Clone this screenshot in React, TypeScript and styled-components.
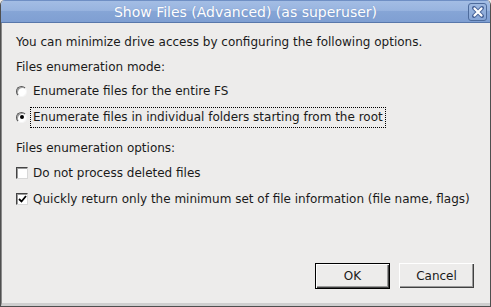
import styled, { createGlobalStyle } from 'styled-components';

const Global = createGlobalStyle`
  html, body {
    margin: 0;
    padding: 0;
    background: #edeceb;
  }
  * {
    box-sizing: border-box;
  }
`;

const Window = styled.div`
  width: 491px;
  height: 307px;
  display: flex;
  flex-direction: column;
  background: #edeceb;
  border: 1px solid #4f4f4f;
  border-top: none;
  border-radius: 5px 5px 0 0;
  overflow: hidden;
  font-family: "DejaVu Sans", Verdana, sans-serif;
  font-size: 12px;
  color: #1a1a1a;
`;

const TitleBar = styled.div`
  height: 23px;
  flex: none;
  position: relative;
  display: flex;
  align-items: center;
  justify-content: center;
  background: linear-gradient(#a3bde4 0%, #98b4df 45%, #86a5d6 48%, #7f9fd2 100%);
  border-top: 1px solid #6f8fc4;
  border-bottom: 1px solid #5877aa;
  color: #ffffff;
  font-size: 14px;
  text-shadow: 0 0 1px #6f8cbf;
`;

const CloseButton = styled.div`
  position: absolute;
  right: 3px;
  top: 2px;
  width: 19px;
  height: 18px;
  border: 1px solid #4d6b9c;
  border-radius: 3px;
  background: linear-gradient(#9db8e0, #86a5d6);
  display: flex;
  align-items: center;
  justify-content: center;
`;

const Body = styled.div`
  flex: 1;
  display: flex;
  flex-direction: column;
  padding: 11px 16px 0 14px;
  border-left: 1px solid #8a8a8a;
  border-bottom: 3px solid #cfcfcf;
`;

const Text = styled.div<{ $top: number }>`
  line-height: 16px;
  margin-top: ${(p) => p.$top}px;
  white-space: nowrap;
`;

const OptionRow = styled.div<{ $top: number }>`
  display: flex;
  align-items: center;
  height: 20px;
  margin-top: ${(p) => p.$top}px;
`;

const Label = styled.span<{ $focused?: boolean }>`
  margin-left: 2px;
  padding: 1px 2px 2px;
  line-height: 16px;
  border: 1px dotted ${(p) => (p.$focused ? '#000' : 'transparent')};
  white-space: nowrap;
`;

const Radio = styled.span<{ $checked?: boolean }>`
  width: 11px;
  height: 11px;
  margin-right: 1px;
  border-radius: 50%;
  background: #ffffff;
  border-top: 1.5px solid #555;
  border-left: 1.5px solid #555;
  border-right: 1px solid #f5f5f5;
  border-bottom: 1px solid #f5f5f5;
  box-shadow: inset 1px 1px 0 #a0a0a0;
  display: flex;
  align-items: center;
  justify-content: center;
  &::after {
    content: '';
    width: 4px;
    height: 4px;
    border-radius: 50%;
    background: ${(p) => (p.$checked ? '#000' : 'transparent')};
  }
`;

const Check = styled.span`
  width: 12px;
  height: 12px;
  background: #ffffff;
  border-top: 1px solid #444;
  border-left: 1px solid #444;
  border-right: 1px solid #d8d8d8;
  border-bottom: 1px solid #d8d8d8;
  box-shadow: inset 1px 1px 0 #9a9a9a;
  display: flex;
  align-items: center;
  justify-content: center;
`;

const Footer = styled.div`
  margin-top: auto;
  margin-bottom: 14px;
  display: flex;
  align-items: flex-start;
  justify-content: flex-end;
  gap: 9px;
`;

const Button = styled.button<{ $default?: boolean }>`
  width: 75px;
  height: ${(p) => (p.$default ? 26 : 25)}px;
  padding: 0;
  font-family: inherit;
  font-size: 12px;
  color: #1a1a1a;
  background: #edeceb;
  border: 1px solid ${(p) => (p.$default ? '#000' : 'transparent')};
  box-shadow: ${(p) =>
    p.$default
      ? 'inset 1px 1px 0 #fff, inset -1px -1px 0 #404040, inset -2px -2px 0 #9a9a9a'
      : 'inset 1px 1px 0 #fff, inset -1px -1px 0 #404040, inset -2px -2px 0 #9a9a9a'};
  border-width: ${(p) => (p.$default ? '1px' : '0')};
`;

const CheckMark = () => (
  <svg width="9" height="9" viewBox="0 0 9 9">
    <path d="M1 4 L3.5 6.5 L8 1" fill="none" stroke="#000" strokeWidth="1.8" />
  </svg>
);

const CloseIcon = () => (
  <svg width="12" height="12" viewBox="0 0 12 12">
    <path d="M2 2 L10 10 M10 2 L2 10" stroke="#4a659a" strokeWidth="4" strokeLinecap="round" />
    <path d="M2.5 2.5 L9.5 9.5 M9.5 2.5 L2.5 9.5" stroke="#ffffff" strokeWidth="2.2" strokeLinecap="round" />
  </svg>
);

export default function App() {
  return (
    <>
      <Global />
      <Window>
        <TitleBar>
          Show Files (Advanced) (as superuser)
          <CloseButton>
            <CloseIcon />
          </CloseButton>
        </TitleBar>
        <Body>
          <Text $top={0}>You can minimize drive access by configuring the following options.</Text>
          <Text $top={9}>Files enumeration mode:</Text>
          <OptionRow $top={6}>
            <Radio />
            <Label>Enumerate files for the entire FS</Label>
          </OptionRow>
          <OptionRow $top={6}>
            <Radio $checked />
            <Label $focused>Enumerate files in individual folders starting from the root</Label>
          </OptionRow>
          <Text $top={13}>Files enumeration options:</Text>
          <OptionRow $top={7}>
            <Check />
            <Label>Do not process deleted files</Label>
          </OptionRow>
          <OptionRow $top={6}>
            <Check>
              <CheckMark />
            </Check>
            <Label>Quickly return only the minimum set of file information (file name, flags)</Label>
          </OptionRow>
          <Footer>
            <Button $default>OK</Button>
            <Button>Cancel</Button>
          </Footer>
        </Body>
      </Window>
    </>
  );
}
